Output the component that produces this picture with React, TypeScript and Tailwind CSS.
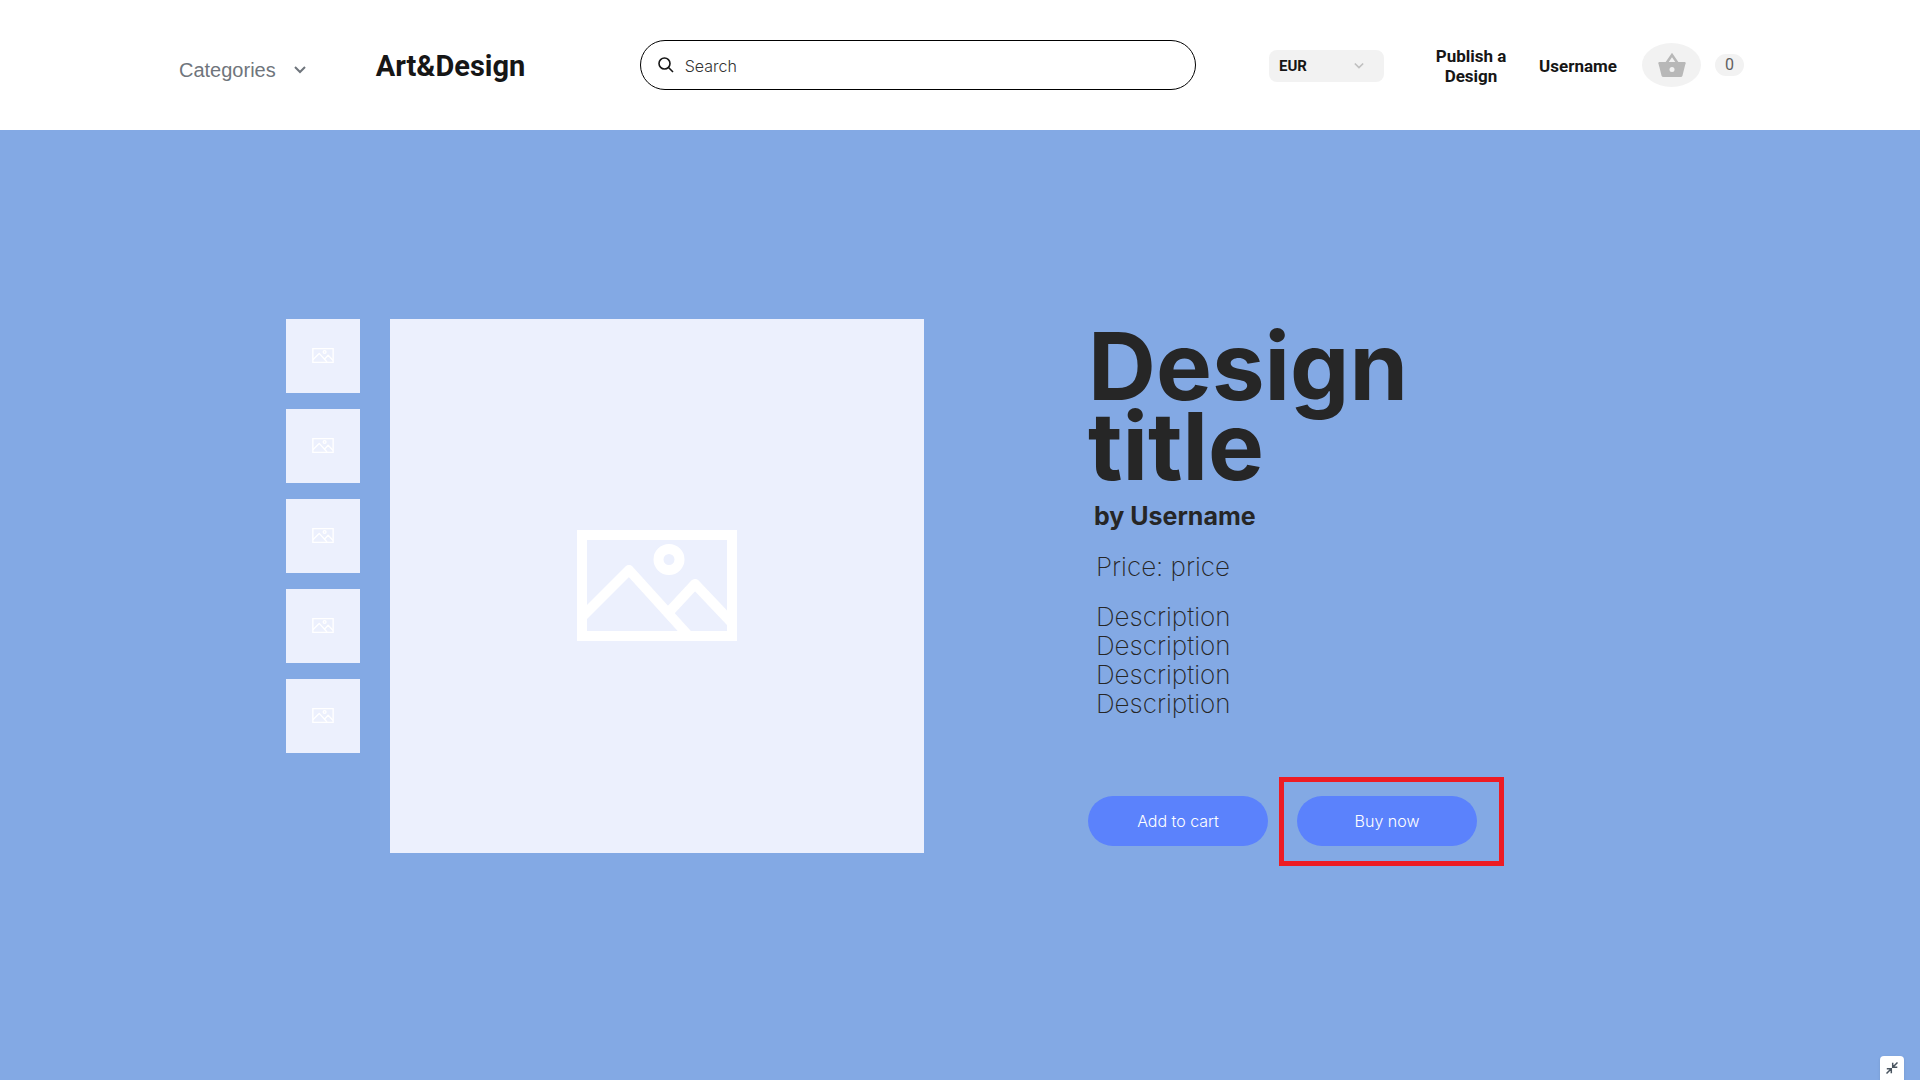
import React from "react";

const thumbnails = [1, 2, 3, 4, 5];
const descriptionLines = [1, 2, 3, 4];

function PictureIcon({ className }: { className: string }) {
  return (
    <svg viewBox="0 0 160 111" className={className} fill="none" stroke="white" strokeWidth="10" aria-hidden="true">
      <path d="M5 5h150v101H5z" />
      <circle cx="92" cy="29.500" r="10.500" />
      <path d="M5 87 52 40l58 64M92 82l26-28 37 39" strokeLinejoin="round" />
    </svg>
  );
}

function Chevron({ className }: { className: string }) {
  return (
    <svg viewBox="0 0 12 8" className={className} fill="none" stroke="currentColor" strokeWidth="2" aria-hidden="true">
      <path d="m1 1 5 5 5-5" />
    </svg>
  );
}

function Header() {
  return (
    <header className="flex h-[130px] items-center bg-white pr-[176px] pl-[179px] text-[#161616]">
      <button type="button" className="mt-[10px] flex items-center gap-[18px] font-['Liberation_Sans',sans-serif] text-xl text-[#6f757c]">
        Categories
        <Chevron className="h-2 w-3" />
      </button>
      <a href="#home" className="mt-[2px] ml-[70px] w-[152px] font-['Roboto',sans-serif] text-[29px] leading-9 font-bold">
        Art&amp;Design
      </a>
      <label className="ml-[112px] flex h-[50px] min-w-0 flex-1 items-center rounded-full border border-black pl-[17px]">
        <svg viewBox="0 0 16 16" className="size-4 shrink-0" fill="none" stroke="currentColor" strokeWidth="1.6" aria-hidden="true">
          <circle cx="6.500" cy="6.500" r="5.500" />
          <path d="m10.500 10.500 4.500 4.500" />
        </svg>
        <input
          type="search"
          aria-label="Search"
          placeholder="Search"
          className="ml-[11px] min-w-0 flex-1 bg-transparent pt-[2px] font-['Inter',sans-serif] text-base font-light outline-none placeholder:text-[#333333]"
        />
      </label>
      <div className="relative mt-[2px] ml-[73px] w-[115px]">
        <select aria-label="Currency" className="h-8 w-full appearance-none rounded-lg bg-[#f2f2f2] pl-[10px] font-['Roboto',sans-serif] text-[15px] font-bold">
          <option>EUR</option>
        </select>
        <Chevron className="pointer-events-none absolute top-3 right-5 h-2 w-[10px] text-[#c0c0c0]" />
      </div>
      <a href="#publish" className="mt-[2px] ml-[45px] w-[84px] text-center font-['Roboto',sans-serif] text-[17px] leading-5 font-bold">
        Publish a Design
      </a>
      <a href="#account" className="mt-[2px] ml-[25px] w-[80px] text-center font-['Roboto',sans-serif] text-[17px] leading-5 font-bold">
        Username
      </a>
      <button type="button" aria-label="Basket" className="ml-[24px] flex h-11 w-[59px] items-center justify-center rounded-[50%] bg-[#f2f2f2]">
        <svg viewBox="0 0 28 24" className="h-6 w-7" aria-hidden="true">
          <path d="m8.500 10 5.500-8 5.500 8" fill="none" stroke="#b8b8b8" strokeWidth="2.500" />
          <path d="M1.200 9h25.600q1 0 .8 1.200l-3.100 12.300q-.4 1.500-2 1.500h-17q-1.600 0-2-1.500L.4 10.200Q.2 9 1.200 9Z" fill="#b8b8b8" />
          <circle cx="14" cy="16.500" r="2.500" fill="#f2f2f2" />
        </svg>
      </button>
      <span className="ml-[14px] flex h-[22px] w-[29px] items-center justify-center rounded-full bg-[#f2f2f2] font-['Roboto',sans-serif] text-base text-[#606060]">
        0
      </span>
    </header>
  );
}

function Gallery() {
  return (
    <div className="flex gap-[30px]">
      <div className="flex flex-col gap-4">
        {thumbnails.map((n) => (
          <button key={n} type="button" aria-label={`View ${n}`} className="flex size-[74px] items-center justify-center bg-[#ecf0fd] pb-px">
            <PictureIcon className="h-[15px] w-[22px]" />
          </button>
        ))}
      </div>
      <div className="flex size-[534px] items-center justify-center bg-[#ecf0fd] pb-px">
        <PictureIcon className="h-[111px] w-[160px]" />
      </div>
    </div>
  );
}

function Details() {
  const action =
    "h-[50px] w-[180px] rounded-full bg-[#5b82fc] font-['Inter',sans-serif] text-base font-light text-white";
  return (
    <section className="w-[546px] pt-[7px] font-['Inter',sans-serif] text-[#262626]">
      <h1 className="max-w-[400px] text-[94px] leading-[80px] font-bold">Design title</h1>
      <p className="mt-4 pl-[6px] text-[25px] leading-[29px] font-bold">by Username</p>
      <p className="mt-[21px] pl-2 text-[26px] leading-[29px] font-extralight">Price: price</p>
      <div className="mt-[21px] pl-2 text-[26px] leading-[29px] font-extralight">
        {descriptionLines.map((n) => (
          <p key={n}>Description</p>
        ))}
      </div>
      <div className="mt-[78px] flex gap-[29px]">
        <button type="button" className={action}>Add to cart</button>
        <div className="relative">
          <button type="button" className={action}>Buy now</button>
          <div className="pointer-events-none absolute -top-[19px] -right-[27px] -bottom-5 -left-[18px] border-5 border-[#ed1c24]" />
        </div>
      </div>
    </section>
  );
}

export default function App() {
  return (
    <div className="flex min-h-screen flex-col bg-[#83a9e4]">
      <Header />
      <main className="flex flex-1 justify-center gap-[164px] pt-[189px]">
        <Gallery />
        <Details />
      </main>
      <button type="button" aria-label="Exit full screen" className="fixed right-4 bottom-0 flex h-6 w-6 items-center justify-center rounded-t bg-white text-[#4a5560] shadow">
        <svg viewBox="0 0 12 12" className="size-3" fill="none" stroke="currentColor" strokeWidth="1.5" aria-hidden="true">
          <path d="M11.500.5 7 5M6.700.8v4.500h4.600M.5 11.500 5 7M.8 6.700h4.500v4.600" />
        </svg>
      </button>
    </div>
  );
}
